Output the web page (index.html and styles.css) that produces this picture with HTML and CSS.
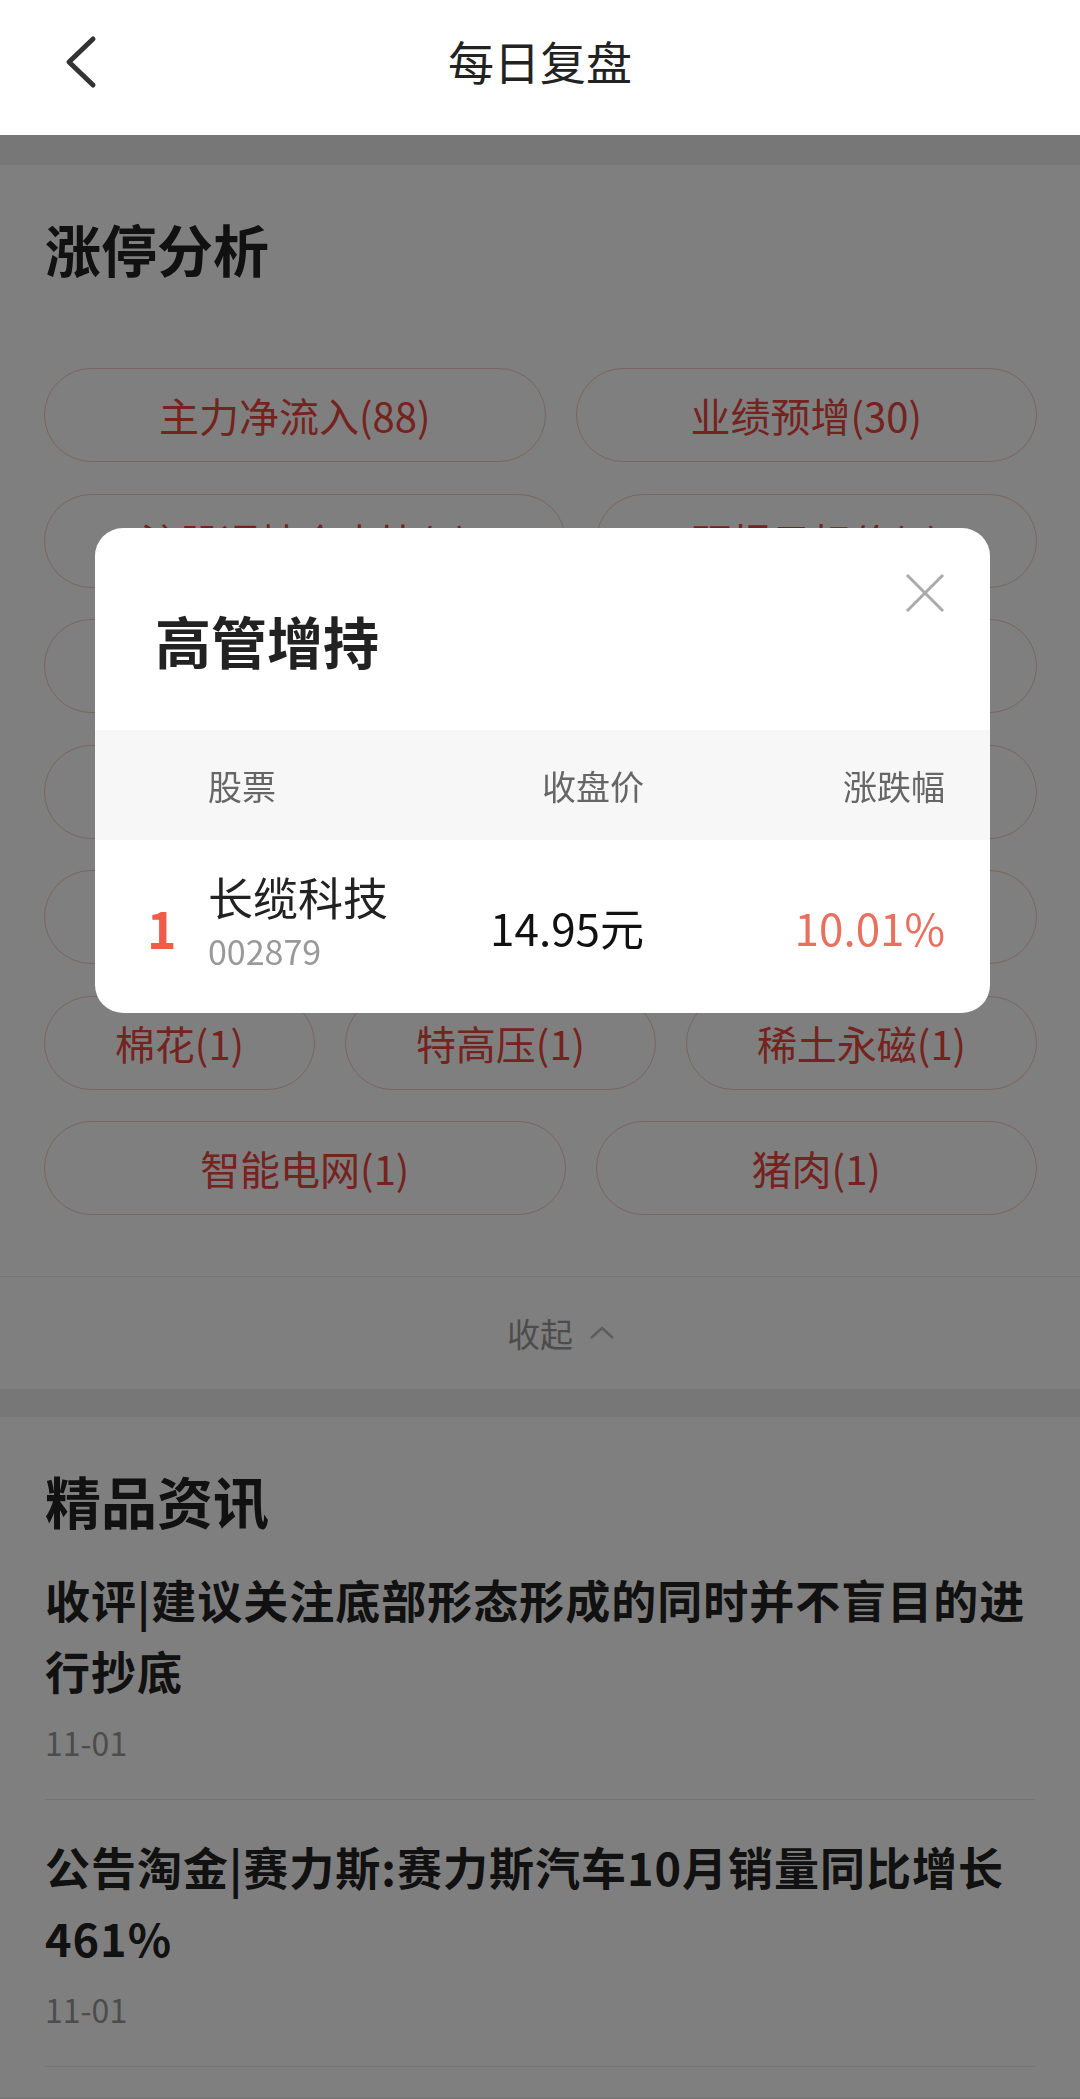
FILE: index.html
```html
<!DOCTYPE html>
<html lang="zh-CN">
  <head>
    <meta charset="UTF-8" />
    <meta name="viewport" content="width=device-width, initial-scale=1.0" />
    <title>每日复盘</title>
    <link rel="stylesheet" href="styles.css">
  </head>
  <body>
    <!-- 顶部导航 -->
    <header class="topbar">
      <a href="#" class="back">
        <svg width="34" height="54" viewBox="0 0 34 54">
          <polyline points="30,4 6,27 30,50" fill="none" stroke="#333" stroke-width="5" stroke-linecap="round" stroke-linejoin="round" />
        </svg>
      </a>
      <h1 class="topbar-title">每日复盘</h1>
    </header>

    <!-- 涨停分析 -->
    <section class="card limit">
      <h2 class="card-title">涨停分析</h2>
      <div class="tags">
        <div class="tag-row">
          <a href="#" class="tag">主力净流入(88)</a>
          <a href="#" class="tag">业绩预增(30)</a>
        </div>
        <div class="tag-row">
          <a href="#" class="tag">沪股通持仓占比(1)</a>
          <a href="#" class="tag">研报目标价(2)</a>
        </div>
        <div class="tag-row">
          <a href="#" class="tag">机构调研(3)</a>
          <a href="#" class="tag">高管增持(1)</a>
        </div>
        <div class="tag-row">
          <a href="#" class="tag">新能源汽车(2)</a>
          <a href="#" class="tag">锂电池(2)</a>
        </div>
        <div class="tag-row">
          <a href="#" class="tag">国企改革(1)</a>
          <a href="#" class="tag">光伏(1)</a>
          <a href="#" class="tag">储能(1)</a>
        </div>
        <div class="tag-row">
          <a href="#" class="tag">棉花(1)</a>
          <a href="#" class="tag">特高压(1)</a>
          <a href="#" class="tag">稀土永磁(1)</a>
        </div>
        <div class="tag-row">
          <a href="#" class="tag">智能电网(1)</a>
          <a href="#" class="tag">猪肉(1)</a>
        </div>
      </div>
      <div class="fold">
        收起
        <svg width="26" height="14" viewBox="0 0 26 14">
          <polyline points="2,12 13,2 24,12" fill="none" stroke="#bbb" stroke-width="2.5" />
        </svg>
      </div>
    </section>

    <!-- 精品资讯 -->
    <section class="card news">
      <h2 class="card-title">精品资讯</h2>
      <ul class="news-list">
        <li class="news-item">
          <p class="news-title">收评|建议关注底部形态形成的同时并不盲目的进行抄底</p>
          <span class="news-date">11-01</span>
        </li>
        <li class="news-item">
          <p class="news-title">公告淘金|赛力斯:赛力斯汽车10月销量同比增长461%</p>
          <span class="news-date">11-01</span>
        </li>
      </ul>
    </section>

    <!-- 弹窗 -->
    <div class="mask">
      <div class="dialog">
        <a href="#" class="close">
          <svg width="40" height="40" viewBox="0 0 40 40">
            <path d="M2 2 L38 38 M38 2 L2 38" stroke="#aaa" stroke-width="3" />
          </svg>
        </a>
        <h3 class="dialog-title">高管增持</h3>
        <div class="grid-row thead">
          <span></span>
          <span>股票</span>
          <span class="num">收盘价</span>
          <span class="num">涨跌幅</span>
        </div>
        <div class="grid-row trow">
          <span class="rank">1</span>
          <div class="stock">
            <div class="stock-name">长缆科技</div>
            <div class="stock-code">002879</div>
          </div>
          <span class="num price">14.95元</span>
          <span class="num change">10.01%</span>
        </div>
      </div>
    </div>
  </body>
</html>
```

FILE: styles.css
```css
/* dasar */
body {
  margin: 0;
  background-color: #eeeeee;
  font-family: "Noto Sans CJK SC", "Noto Sans", sans-serif;
  color: #222;
}

a {
  text-decoration: none;
}

/* header */
.topbar {
  height: 135px;
  box-sizing: border-box;
  padding-bottom: 12px;
  background-color: #fff;
  display: grid;
  grid-template-columns: 1fr auto 1fr;
  align-items: center;
}

.back {
  justify-self: start;
  margin-left: 63px;
  display: flex;
}

.topbar-title {
  margin: 0 0 4px;
  font-size: 46px;
  font-weight: 400;
  line-height: 1;
  color: #222;
}

/* card */
.card {
  background-color: #fff;
}

.limit {
  margin-top: 30px;
}

.news {
  margin-top: 28px;
  padding-bottom: 30px;
}

.card-title {
  margin: 0;
  padding: 49px 45px 0;
  font-size: 56px;
  line-height: 67px;
  font-weight: 700;
  color: #222;
}

/* tags */
.tags {
  display: flex;
  flex-direction: column;
  gap: 31.5px;
  padding: 87px 43px 61px 44px;
}

.tag-row {
  display: flex;
  gap: 30px;
}

.tag {
  flex: 1 1 auto;
  height: 94px;
  box-sizing: border-box;
  padding: 0 20px;
  border: 1px solid #f2c9c5;
  border-radius: 47px;
  display: flex;
  align-items: center;
  justify-content: center;
  font-size: 40px;
  color: #e8463e;
  white-space: nowrap;
}

.fold {
  border-top: 1px solid #e6e6e6;
  height: 113px;
  box-sizing: border-box;
  padding-left: 42px;
  display: flex;
  align-items: center;
  justify-content: center;
  gap: 16px;
  font-size: 33px;
  color: #999;
}

/* news */
.news-list {
  list-style-type: none;
  margin: 0;
  padding: 0 45px;
}

.news-item {
  padding: 31px 0 37px;
  border-bottom: 1px solid #e8e8e8;
}

.news-title {
  margin: 0;
  font-size: 45px;
  line-height: 71px;
  font-weight: 700;
  letter-spacing: 1px;
  color: #222;
}

.news-date {
  display: block;
  margin-top: 16px;
  font-size: 32px;
  line-height: 40px;
  color: #999;
}

/* dialog */
.mask {
  position: fixed;
  top: 135px;
  left: 0;
  right: 0;
  bottom: 0;
  background-color: rgba(0, 0, 0, 0.5);
}

.dialog {
  position: absolute;
  top: 393px;
  left: 95px;
  width: 895px;
  height: 485px;
  background-color: #fff;
  border-radius: 28px;
  overflow: hidden;
}

.close {
  position: absolute;
  top: 45px;
  right: 45px;
  display: flex;
}

.dialog-title {
  margin: 0;
  padding: 78px 60px 0;
  font-size: 56px;
  line-height: 67px;
  font-weight: 700;
  color: #222;
}

.grid-row {
  display: grid;
  grid-template-columns: 61px 1fr 200px 301px;
  align-items: center;
  padding: 0 45px 0 52px;
}

.thead {
  margin-top: 57px;
  height: 110px;
  background-color: #f7f7f7;
  font-size: 34px;
  color: #666;
}

.num {
  text-align: right;
}

.trow {
  height: 173px;
}

.rank {
  font-size: 50px;
  font-weight: 700;
  color: #f25a4c;
}

.stock {
  padding-bottom: 5px;
}

.stock-name {
  font-size: 45px;
  line-height: 54px;
  color: #222;
}

.stock-code {
  font-size: 34px;
  line-height: 54px;
  color: #999;
}

.price {
  font-size: 44px;
  color: #111;
}

.change {
  font-size: 44px;
  color: #e8705f;
}
```
